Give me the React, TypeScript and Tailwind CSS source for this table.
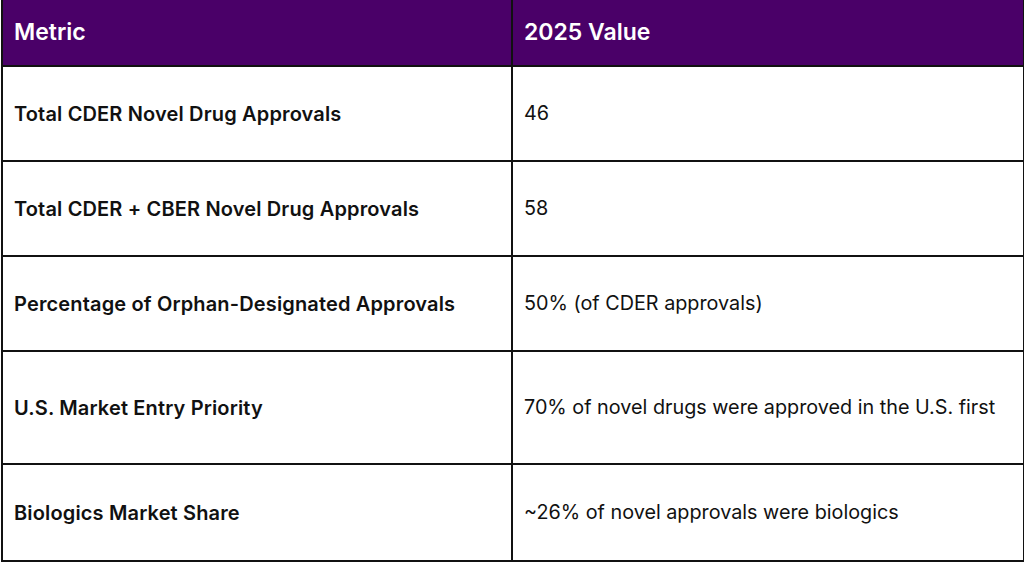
const rows = [
  { metric: "Total CDER Novel Drug Approvals", value: "46", h: "h-[95px]" },
  { metric: "Total CDER + CBER Novel Drug Approvals", value: "58", h: "h-[95px]" },
  { metric: "Percentage of Orphan-Designated Approvals", value: "50% (of CDER approvals)", h: "h-[95px]" },
  { metric: "U.S. Market Entry Priority", value: "70% of novel drugs were approved in the U.S. first", h: "h-[113px]" },
  { metric: "Biologics Market Share", value: "~26% of novel approvals were biologics", h: "h-[97px]" },
];

export default function App() {
  return (
    <div className="h-[566px] w-[1024px] bg-white pl-px font-['Inter',sans-serif] text-[#111]">
      <table className="w-[1022px] table-fixed border-collapse">
        <colgroup>
          <col className="w-[510px]" />
          <col className="w-[512px]" />
        </colgroup>
        <thead>
          <tr className="h-[66px] bg-[#4a0068] text-left text-white">
            <th className="border-2 border-t-0 border-[#111] px-[11px] text-[23px] font-semibold">Metric</th>
            <th className="border-2 border-t-0 border-[#111] px-[11px] text-[23px] font-semibold">2025 Value</th>
          </tr>
        </thead>
        <tbody>
          {rows.map((r) => (
            <tr key={r.metric} className={r.h}>
              <td className="border-2 border-[#111] px-[11px] text-[20px] font-semibold tracking-[0.15px]">{r.metric}</td>
              <td className="border-2 border-[#111] px-[11px] text-[19.8px]">{r.value}</td>
            </tr>
          ))}
        </tbody>
      </table>
    </div>
  );
}
